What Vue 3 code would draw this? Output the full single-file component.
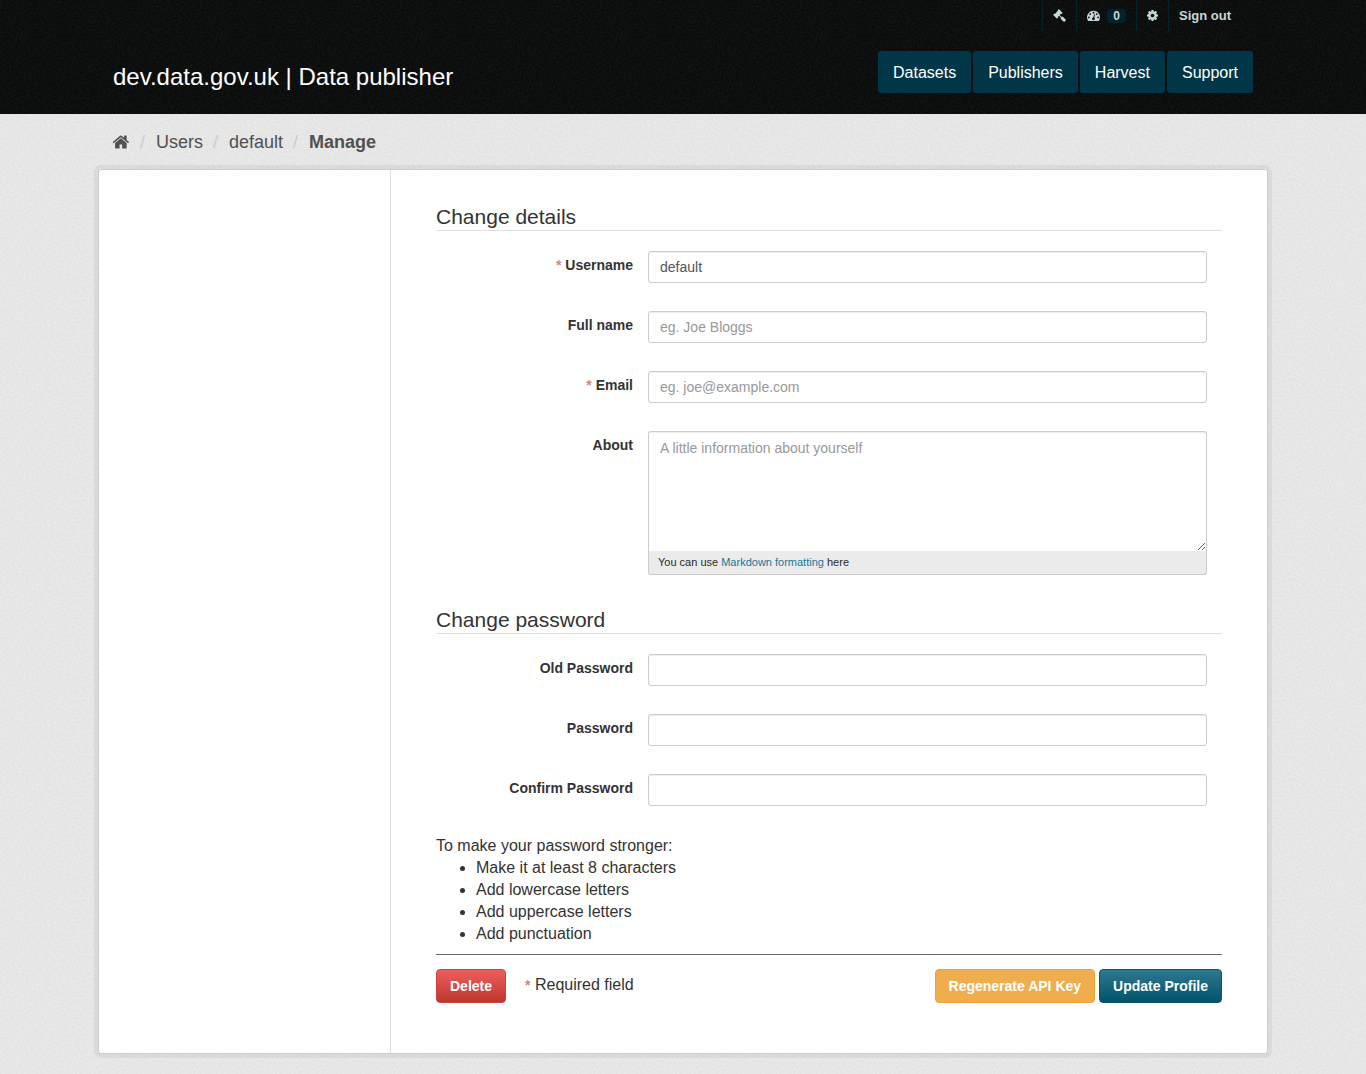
<script setup>
import { reactive } from 'vue'

const navItems = ['Datasets', 'Publishers', 'Harvest', 'Support']
const crumbs = ['Users', 'default']
const tips = [
  'Make it at least 8 characters',
  'Add lowercase letters',
  'Add uppercase letters',
  'Add punctuation'
]
const detailFields = [
  { id: 'username', label: 'Username', type: 'text', placeholder: '', required: true },
  { id: 'fullname', label: 'Full name', type: 'text', placeholder: 'eg. Joe Bloggs', required: false },
  { id: 'email', label: 'Email', type: 'email', placeholder: 'eg. joe@example.com', required: true }
]
const passwordFields = [
  { id: 'old-password', label: 'Old Password' },
  { id: 'password', label: 'Password' },
  { id: 'confirm-password', label: 'Confirm Password' }
]
const form = reactive({ username: 'default', fullname: '', email: '', about: '' })
</script>

<template>
  <div class="page">
    <header class="masthead">
      <div class="container">
        <ul class="account">
          <li>
            <a href="#" aria-label="Sysadmin settings">
              <svg class="icon" viewBox="0 0 1792 1792"><path d="M1771 1536q0 53-37 90l-107 108q-39 37-91 37-53 0-90-37l-363-364q-38-36-38-90 0-53 43-96l-256-256-126 126q-14 14-34 14t-34-14q2 2 12.5 12t12.5 13 10 11.5 10 13.5 6 13.5 5.5 16.5 1.5 18q0 38-28 68-3 3-16.5 18t-19 20.5-18.5 16.5-22 15.5-22 9-26 4.5q-40 0-68-28l-408-408q-28-28-28-68 0-13 4.5-26t9-22 15.5-22 16.5-18.5 20.5-19 18-16.5q30-28 68-28 10 0 18 1.5t16.5 5.5 13.5 6 13.5 10 11.5 10 13 12.5 12 12.5q-14-14-14-34t14-34l348-348q14-14 34-14t34 14q-2-2-12.5-12t-12.5-13-10-11.5-10-13.5-6-13.5-5.5-16.5-1.5-18q0-38 28-68 3-3 16.5-18t19-20.5 18.5-16.5 22-15.5 22-9 26-4.5q40 0 68 28l408 408q28 28 28 68 0 13-4.5 26t-9 22-15.5 22-16.5 18.5-20.5 19-18 16.5q-30 28-68 28-10 0-18-1.5t-16.5-5.5-13.5-6-13.5-10-11.5-10-13-12.5-12-12.5q14 14 14 34t-14 34l-126 126 256 256q43-43 96-43 52 0 91 37l363 363q37 39 37 91z" /></svg>
            </a>
          </li>
          <li>
            <a href="#" aria-label="Dashboard">
              <svg class="icon" viewBox="0 0 1792 1792"><path d="M384 1152q0-53-37.5-90.5t-90.5-37.5-90.5 37.5-37.5 90.5 37.5 90.5 90.5 37.5 90.5-37.5 37.5-90.5zm192-448q0-53-37.5-90.5t-90.5-37.5-90.5 37.5-37.5 90.5 37.5 90.5 90.5 37.5 90.5-37.5 37.5-90.5zm428 481l101-382q6-26-7.5-48.5t-38.5-29.5-48 6.5-30 39.5l-101 382q-60 5-107 43.5t-63 98.5q-20 77 20 146t117 89 146-20 89-117q16-60-6-117t-72-91zm660-33q0-53-37.5-90.5t-90.5-37.5-90.5 37.5-37.5 90.5 37.5 90.5 90.5 37.5 90.5-37.5 37.5-90.5zm-640-640q0-53-37.5-90.5t-90.5-37.5-90.5 37.5-37.5 90.5 37.5 90.5 90.5 37.5 90.5-37.5 37.5-90.5zm448 192q0-53-37.5-90.5t-90.5-37.5-90.5 37.5-37.5 90.5 37.5 90.5 90.5 37.5 90.5-37.5 37.5-90.5zm320 448q0 261-141 483-19 29-54 29h-1402q-35 0-54-29-141-221-141-483 0-182 71-348t191-286 286-191 348-71 348 71 286 191 191 286 71 348z" /></svg>
              <span class="count">0</span>
            </a>
          </li>
          <li>
            <a href="#" aria-label="Settings">
              <svg class="icon narrow" viewBox="128 0 1536 1792"><path d="M1152 896q0-106-75-181t-181-75-181 75-75 181 75 181 181 75 181-75 75-181zm512-109v222q0 12-8 23t-20 13l-185 28q-19 54-39 91 35 50 107 138 10 12 10 25t-9 23q-27 37-99 108t-94 71q-12 0-26-9l-138-108q-44 23-91 38-16 136-29 186-7 28-36 28h-222q-14 0-24.5-8.5t-11.5-21.5l-28-184q-49-16-90-37l-141 107q-10 9-25 9-14 0-25-11-126-114-165-168-7-10-7-23 0-12 8-23 15-21 51-66.5t54-70.5q-27-50-41-99l-183-27q-13-2-21-12.5t-8-23.5v-222q0-12 8-23t19-13l186-28q14-46 39-92-40-57-107-138-10-12-10-24 0-10 9-23 26-36 98.5-107.5t94.5-71.5q13 0 26 10l138 107q44-23 91-38 16-136 29-186 7-28 36-28h222q14 0 24.5 8.5t11.5 21.5l28 184q49 16 90 37l142-107q9-9 24-9 13 0 25 10 129 119 165 170 7 8 7 22 0 12-8 23-15 21-51 66.5t-54 70.5q26 50 41 98l183 28q13 2 21 12.5t8 23.5z" /></svg>
            </a>
          </li>
          <li><a href="#">Sign out</a></li>
        </ul>
        <div class="brand-row">
          <a class="brand" href="#">dev.data.gov.uk | Data publisher</a>
          <nav class="nav">
            <a v-for="item in navItems" :key="item" href="#">{{ item }}</a>
          </nav>
        </div>
      </div>
    </header>

    <div class="container">
      <ol class="breadcrumb">
        <li>
          <a href="#" aria-label="Home">
            <svg class="home" viewBox="64 0 1664 1792"><path d="M1408 992v480q0 26-19 45t-45 19h-384v-384h-256v384h-384q-26 0-45-19t-19-45v-480q0-1 .5-3t.5-3l575-474 575 474q1 2 1 6zm223-69l-62 74q-8 9-21 11h-3q-13 0-21-7l-692-577-692 577q-12 8-24 7-13-2-21-11l-62-74q-8-10-7-23.5t11-21.5l719-599q32-26 76-26t76 26l244 204v-195q0-14 9-23t23-9h192q14 0 23 9t9 23v408l219 182q10 8 11 21.5t-7 23.5z" /></svg>
          </a>
        </li>
        <li v-for="crumb in crumbs" :key="crumb"><a href="#">{{ crumb }}</a></li>
        <li class="active"><a href="#">Manage</a></li>
      </ol>
    </div>

    <div class="wrapper">
      <aside class="sidebar"></aside>
      <main class="primary">
        <form @submit.prevent>
          <h2>Change details</h2>
          <div class="fields">
            <div v-for="field in detailFields" :key="field.id" class="row">
              <label :for="field.id"><span v-if="field.required" class="req">*</span> {{ field.label }}</label>
              <input :id="field.id" v-model="form[field.id]" :type="field.type" :placeholder="field.placeholder">
            </div>
            <div class="row">
              <label for="about">About</label>
              <div class="editor">
                <textarea id="about" v-model="form.about" placeholder="A little information about yourself"></textarea>
                <div class="hint">You can use <a href="#">Markdown formatting</a> here</div>
              </div>
            </div>
          </div>

          <h2>Change password</h2>
          <div class="fields">
            <div v-for="field in passwordFields" :key="field.id" class="row">
              <label :for="field.id">{{ field.label }}</label>
              <input :id="field.id" type="password">
            </div>
          </div>

          <div class="tips">
            <p>To make your password stronger:</p>
            <ul>
              <li v-for="tip in tips" :key="tip">{{ tip }}</li>
            </ul>
          </div>

          <div class="actions">
            <button class="btn danger" type="button">Delete</button>
            <p class="note"><span class="req">*</span> Required field</p>
            <button class="btn warning" type="button">Regenerate API Key</button>
            <button class="btn primary-btn" type="submit">Update Profile</button>
          </div>
        </form>
      </main>
    </div>
  </div>
</template>

<style>
body {
  margin: 0;
  background-color: #e7e7e7;
}
</style>

<style scoped>
* {
  box-sizing: border-box;
}

.page {
  --grain: url("data:image/svg+xml,%3Csvg xmlns='http://www.w3.org/2000/svg' width='100' height='100'%3E%3Cfilter id='n' x='0' y='0' width='1' height='1'%3E%3CfeTurbulence type='fractalNoise' baseFrequency='.5' numOctaves='2' stitchTiles='stitch'/%3E%3CfeColorMatrix values='0 0 0 0 1 0 0 0 0 1 0 0 0 0 1 3 0 0 0 -1'/%3E%3C/filter%3E%3Crect width='100' height='100' filter='url(%23n)' opacity='.24'/%3E%3C/svg%3E");
  --grain-dark: url("data:image/svg+xml,%3Csvg xmlns='http://www.w3.org/2000/svg' width='100' height='100'%3E%3Cfilter id='n' x='0' y='0' width='1' height='1'%3E%3CfeTurbulence type='fractalNoise' baseFrequency='.5' numOctaves='2' stitchTiles='stitch'/%3E%3CfeColorMatrix values='0 0 0 0 1 0 0 0 0 1 0 0 0 0 1 3 0 0 0 -1'/%3E%3C/filter%3E%3Crect width='100' height='100' filter='url(%23n)' opacity='.03'/%3E%3C/svg%3E");
  overflow: hidden;
  padding-bottom: 20px;
  background: #e3e3e3 var(--grain);
  color: #333;
  font: 16px/22px "Helvetica Neue", Helvetica, "Liberation Sans", Arial, sans-serif;
}

a {
  color: inherit;
  text-decoration: none;
}

ul,
ol,
p,
h2 {
  margin: 0;
  padding: 0;
}

.container {
  max-width: 1170px;
  margin: 0 auto;
  padding: 0 15px;
}

.masthead {
  height: 114px;
  background: #090b0b var(--grain-dark);
  color: #fff;
}

.account {
  display: flex;
  justify-content: flex-end;
  padding-right: 12px;
  list-style: none;
  color: #c6d7db;
  font-size: 13px;
  font-weight: bold;
}

.account li {
  border-left: 1px solid #03232e;
}

.account a {
  display: flex;
  align-items: center;
  height: 31px;
  padding: 0 10px;
}

.icon {
  width: 13px;
  height: 13px;
  fill: currentColor;
}

.icon.narrow {
  width: 11px;
}

.count {
  margin-left: 7px;
  padding: 0 6px;
  border-radius: 4px;
  background: #03222c;
  font-size: 12px;
  line-height: 14px;
}

.brand-row {
  display: flex;
  align-items: center;
  justify-content: space-between;
  padding-top: 20px;
}

.brand {
  padding-top: 10px;
  font-size: 24px;
  line-height: 32px;
}

.nav {
  display: flex;
  gap: 2px;
}

.nav a {
  padding: 11px 15px 9px;
  border-radius: 3px;
  background: #003647;
}

.breadcrumb {
  display: flex;
  height: 55px;
  padding-top: 17px;
  list-style: none;
  color: #505050;
  font-size: 18px;
}

.breadcrumb li + li::before {
  content: "/";
  padding: 0 11px 0 10px;
  color: #ccc;
  font-weight: normal;
}

.breadcrumb .active {
  font-weight: bold;
}

.home {
  display: block;
  width: 17px;
  height: 18px;
  margin-top: 2px;
  fill: currentColor;
}

.breadcrumb li {
  display: flex;
}

.wrapper {
  display: grid;
  grid-template-columns: 1fr 3fr;
  max-width: 1170px;
  margin: 0 auto;
  border: 1px solid #ccc;
  border-radius: 3px;
  background: #fff;
  box-shadow: 0 0 0 4px rgba(0, 0, 0, 0.05);
}

.sidebar {
  border-right: 1px solid #ddd;
}

.primary {
  padding: 35px 45px 50px;
}

h2 {
  padding-bottom: 1px;
  border-bottom: 1px solid #e0e0e0;
  font-size: 21px;
  font-weight: normal;
  line-height: 24px;
}

.fields {
  display: grid;
  gap: 28px;
  padding: 20px 15px 29px 0;
}

.fields + h2 {
  margin-top: 4px;
}

.row {
  display: grid;
  grid-template-columns: 197px 1fr;
  gap: 15px;
}

.row label {
  padding-top: 4px;
  font-size: 14px;
  font-weight: bold;
  line-height: 20px;
  text-align: right;
}

.req {
  color: #c6898b;
  font-size: 14px;
  font-weight: bold;
}

input,
textarea {
  display: block;
  width: 100%;
  height: 32px;
  padding: 0 11px;
  border: 1px solid #ccc;
  border-radius: 3px;
  background: #fff;
  box-shadow: inset 0 1px 1px rgba(0, 0, 0, 0.075);
  color: #555;
  font: 14px/20px "Helvetica Neue", Helvetica, "Liberation Sans", Arial, sans-serif;
}

input::placeholder,
textarea::placeholder {
  color: #999;
}

textarea {
  height: 120px;
  padding: 6px 11px;
  border-bottom: 0;
  border-radius: 3px 3px 0 0;
  resize: vertical;
}

.hint {
  padding: 0 9px;
  border: 1px solid #ccc;
  border-top: 0;
  border-radius: 0 0 3px 3px;
  background: #ebebeb;
  color: #282828;
  font-size: 11px;
  line-height: 23px;
}

.hint a {
  color: #187794;
}

.tips ul {
  padding-left: 40px;
}

.actions {
  display: flex;
  align-items: flex-start;
  gap: 4px;
  margin-top: 9px;
  padding-top: 14px;
  border-top: 1px solid #686868;
}

.note {
  flex: 1;
  padding: 5px 0 0 15px;
}

.btn {
  height: 34px;
  padding: 0 13px;
  border: 1px solid;
  border-radius: 4px;
  color: #fff;
  font: bold 14px/20px "Helvetica Neue", Helvetica, "Liberation Sans", Arial, sans-serif;
}

.btn.danger {
  border-color: #d43f3a;
  background: linear-gradient(#ee5f5b, #bd362f);
}

.btn.warning {
  border-color: #eea236;
  background: #f0ad4e;
}

.btn.primary-btn {
  border-color: #0d5569;
  background: linear-gradient(#2f7890, #00536b);
}
</style>
